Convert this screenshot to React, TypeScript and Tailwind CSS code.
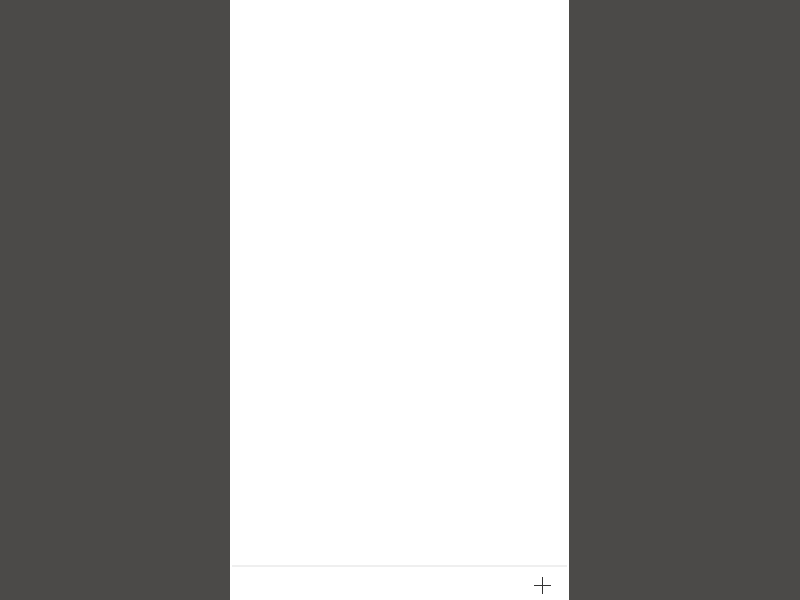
export default function App() {
  return (
    <div className="flex h-[600px] w-[800px] bg-[#4b4a48] pl-[230px] font-['Liberation_Sans',sans-serif]">
      <div className="flex h-full w-[339px] flex-col bg-white">
        <div className="flex-1" />
        <div className="mx-[2px] h-[2px] bg-[#efefef]" />
        <div className="flex h-[33px] items-start justify-end pr-[18px] pt-[10px]">
          <button className="flex h-[17px] w-[17px] items-center justify-center text-[#333]">
            <svg width="17" height="17" viewBox="0 0 17 17" fill="none" stroke="currentColor" strokeWidth="1">
              <path d="M8.5 0v17M0 8.5h17" />
            </svg>
          </button>
        </div>
      </div>
    </div>
  );
}
